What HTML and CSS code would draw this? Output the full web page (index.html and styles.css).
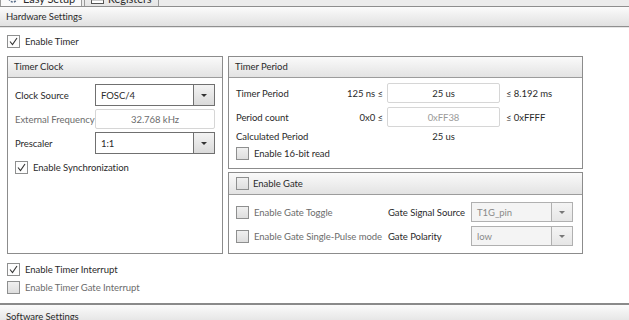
FILE: index.html
```html
<!DOCTYPE html>
<html lang="en">
<head>
    <meta charset="UTF-8">
    <title>Timer Easy Setup</title>
    <link rel="stylesheet" href="styles.css">
</head>
<body>
    <div class="tabstrip">
        <div class="tab tab-active">
            <svg class="tab-icon" width="12" height="12" viewBox="0 0 12 12"><circle cx="6" cy="6" r="4" fill="none" stroke="#5a6f8a" stroke-width="1.6" stroke-dasharray="2 1.2"/><circle cx="6" cy="6" r="1.6" fill="none" stroke="#5a6f8a"/></svg>
            <span>Easy Setup</span>
        </div>
        <div class="tab">
            <svg class="tab-icon" width="13" height="12" viewBox="0 0 13 12"><rect x="0.5" y="0.5" width="12" height="11" fill="#fff" stroke="#555"/><line x1="0.5" y1="4" x2="12.5" y2="4" stroke="#555"/><line x1="0.5" y1="8" x2="12.5" y2="8" stroke="#999"/></svg>
            <span>Registers</span>
        </div>
    </div>

    <div class="section-header">Hardware Settings</div>

    <div class="hw">
        <div class="check">
            <span class="box checked"><svg width="11" height="11" viewBox="0 0 11 11"><polyline points="2,5.5 4.5,8.5 9,2" fill="none" stroke="#333" stroke-width="1.1"/></svg></span>
            Enable Timer
        </div>

        <div class="groups">
            <div class="group clock">
                <div class="group-title">Timer Clock</div>
                <div class="group-body">
                    <div class="row row-combo">
                        <span class="lbl clock-lbl">Clock Source</span>
                        <div class="combo clock-ctl"><span class="combo-text">FOSC/4</span><span class="combo-btn"><i class="arrow"></i></span></div>
                    </div>
                    <div class="row row-freq">
                        <span class="lbl clock-lbl muted">External Frequency</span>
                        <div class="field clock-ctl muted">32.768 kHz</div>
                    </div>
                    <div class="row row-presc">
                        <span class="lbl clock-lbl">Prescaler</span>
                        <div class="combo clock-ctl"><span class="combo-text">1:1</span><span class="combo-btn"><i class="arrow"></i></span></div>
                    </div>
                    <div class="check row-sync">
                        <span class="box checked"><svg width="11" height="11" viewBox="0 0 11 11"><polyline points="2,5.5 4.5,8.5 9,2" fill="none" stroke="#333" stroke-width="1.1"/></svg></span>
                        Enable Synchronization
                    </div>
                </div>
            </div>

            <div class="right-col">
                <div class="group period">
                    <div class="group-title">Timer Period</div>
                    <div class="group-body">
                        <div class="row row-tp">
                            <span class="lbl period-lbl">Timer Period</span>
                            <span class="prefix">125 ns ≤</span>
                            <div class="field period-ctl">25 us</div>
                            <span class="suffix">≤ 8.192 ms</span>
                        </div>
                        <div class="row row-pc">
                            <span class="lbl period-lbl">Period count</span>
                            <span class="prefix">0x0 ≤</span>
                            <div class="field period-ctl faint">0xFF38</div>
                            <span class="suffix">≤ 0xFFFF</span>
                        </div>
                        <div class="row row-calc">
                            <span class="lbl period-lbl">Calculated Period</span>
                            <span class="prefix"></span>
                            <span class="calc-value">25 us</span>
                        </div>
                        <div class="check row-16">
                            <span class="box"></span>
                            Enable 16-bit read
                        </div>
                    </div>
                </div>

                <div class="group gate">
                    <div class="group-title gate-title">
                        <span class="box"></span>
                        Enable Gate
                    </div>
                    <div class="group-body">
                        <div class="row row-gate1">
                            <div class="check gate-check muted"><span class="box"></span>Enable Gate Toggle</div>
                            <span class="lbl gate-lbl">Gate Signal Source</span>
                            <div class="combo combo-off gate-ctl"><span class="combo-text">T1G_pin</span><span class="combo-btn"><i class="arrow"></i></span></div>
                        </div>
                        <div class="row row-gate2">
                            <div class="check gate-check muted"><span class="box"></span>Enable Gate Single-Pulse mode</div>
                            <span class="lbl gate-lbl">Gate Polarity</span>
                            <div class="combo combo-off gate-ctl"><span class="combo-text">low</span><span class="combo-btn"><i class="arrow"></i></span></div>
                        </div>
                    </div>
                </div>
            </div>
        </div>

        <div class="bottom-checks">
            <div class="check">
                <span class="box checked"><svg width="11" height="11" viewBox="0 0 11 11"><polyline points="2,5.5 4.5,8.5 9,2" fill="none" stroke="#333" stroke-width="1.1"/></svg></span>
                Enable Timer Interrupt
            </div>
            <div class="check muted">
                <span class="box"></span>
                Enable Timer Gate Interrupt
            </div>
        </div>
    </div>

    <div class="section-header software">Software Settings</div>
</body>
</html>
```

FILE: styles.css
```css
body {
    margin: 0;
    width: 629px;
    height: 320px;
    overflow: hidden;
    font-family: Lato, "Open Sans", sans-serif;
    font-size: 9.5px;
    letter-spacing: -0.05px;
    color: #2a2a2a;
    background: #ffffff;
    white-space: nowrap;
}

.tabstrip {
    height: 6px;
    border-bottom: 1px solid #8e8e8e;
    background: #ececec;
    display: flex;
    gap: 2px;
    overflow: hidden;
}
.tab {
    height: 18px;
    margin-top: -12px;
    padding: 0 6px;
    display: flex;
    align-items: center;
    gap: 4px;
    border: 1px solid #9a9a9a;
    border-bottom: none;
    background: linear-gradient(#f6f6f6, #e4e4e4);
    font-size: 11px;
}
.tab-active {
    background: #fafafa;
}

.section-header {
    height: 19px;
    line-height: 19px;
    padding-left: 6px;
    background: linear-gradient(#fbfbfb, #e1e1e1);
    border-bottom: 1px solid #8f8f8f;
    box-shadow: 0 1px 0 #e6e6e6;
}
.software {
    border-top: 2px solid #8a8a8a;
    line-height: 24px;
}

.hw {
    padding: 8px 0 9px 7px;
}

.check {
    height: 13px;
    display: flex;
    align-items: center;
    gap: 5px;
}
.box {
    width: 11px;
    height: 11px;
    border: 1px solid #8e8f8f;
    background: linear-gradient(#f0f0f0, #dedede);
    display: flex;
    align-items: center;
    justify-content: center;
    flex: none;
}
.box.checked {
    background: #fdfdfd;
}

.groups {
    margin-top: 8px;
    display: flex;
    gap: 5px;
}
.group {
    border: 1px solid #8c8c8c;
    display: flex;
    flex-direction: column;
}
.clock {
    width: 214px;
}
.right-col {
    display: flex;
    flex-direction: column;
    gap: 3px;
}
.period {
    width: 353px;
    height: 111px;
}
.gate {
    width: 353px;
    height: 80px;
}
.group-title {
    height: 20px;
    line-height: 20px;
    padding-left: 6px;
    background: linear-gradient(#fafafa, #e3e3e3);
    border-bottom: 1px solid #9c9c9c;
    flex: none;
}
.gate-title {
    height: 21px;
    display: flex;
    align-items: center;
    gap: 4px;
    padding-left: 7px;
}
.group-body {
    padding: 0 7px;
    flex: 1;
}

.row {
    display: flex;
    align-items: center;
}
.muted {
    color: #6c6c6c;
}
.faint {
    color: #9a9a9a;
}

/* timer clock */
.clock-lbl {
    width: 80px;
}
.clock-ctl {
    width: 120px;
}
.row-combo {
    margin-top: 6px;
    height: 22px;
}
.row-freq {
    margin-top: 3px;
    height: 20px;
}
.row-presc {
    margin-top: 3px;
    height: 22px;
}
.row-sync {
    margin-top: 7px;
}

.combo {
    height: 100%;
    box-sizing: border-box;
    border: 1px solid #707070;
    background: #ffffff;
    display: flex;
}
.combo-text {
    flex: 1;
    padding-left: 5px;
    display: flex;
    align-items: center;
}
.combo-btn {
    width: 20px;
    border-left: 1px solid #707070;
    background: linear-gradient(#f3f3f3, #dadada);
    display: flex;
    align-items: center;
    justify-content: center;
}
.arrow {
    width: 0;
    height: 0;
    border-left: 3px solid transparent;
    border-right: 3px solid transparent;
    border-top: 3px solid #333;
}
.combo-off {
    border-color: #b0b0b0;
    background: #f4f4f4;
    color: #8a8a8a;
}
.combo-off .combo-btn {
    border-left-color: #b0b0b0;
    background: linear-gradient(#f4f4f4, #e6e6e6);
}
.combo-off .arrow {
    border-top-color: #777;
}

.field {
    height: 100%;
    box-sizing: border-box;
    border: 1px solid #d6d6d6;
    border-radius: 2px;
    display: flex;
    align-items: center;
    justify-content: center;
}

/* timer period */
.period-lbl {
    width: 96px;
}
.prefix {
    width: 51px;
    margin-right: 4px;
    text-align: right;
}
.period-ctl {
    width: 113px;
}
.suffix {
    margin-left: 6px;
}
.calc-value {
    width: 113px;
    text-align: center;
}
.row-tp {
    margin-top: 5px;
    height: 20px;
}
.row-pc {
    margin-top: 4px;
    height: 20px;
}
.row-calc {
    margin-top: 1px;
    height: 16px;
}
.row-16 {
    margin-top: 3px;
}

/* gate */
.gate-check {
    width: 152px;
}
.gate-lbl {
    width: 83px;
}
.gate-ctl {
    width: 102px;
}
.row-gate1 {
    margin-top: 7px;
    height: 20px;
}
.row-gate2 {
    margin-top: 4px;
    height: 20px;
}

.bottom-checks {
    margin-top: 9px;
    display: flex;
    flex-direction: column;
    gap: 5px;
}
```
